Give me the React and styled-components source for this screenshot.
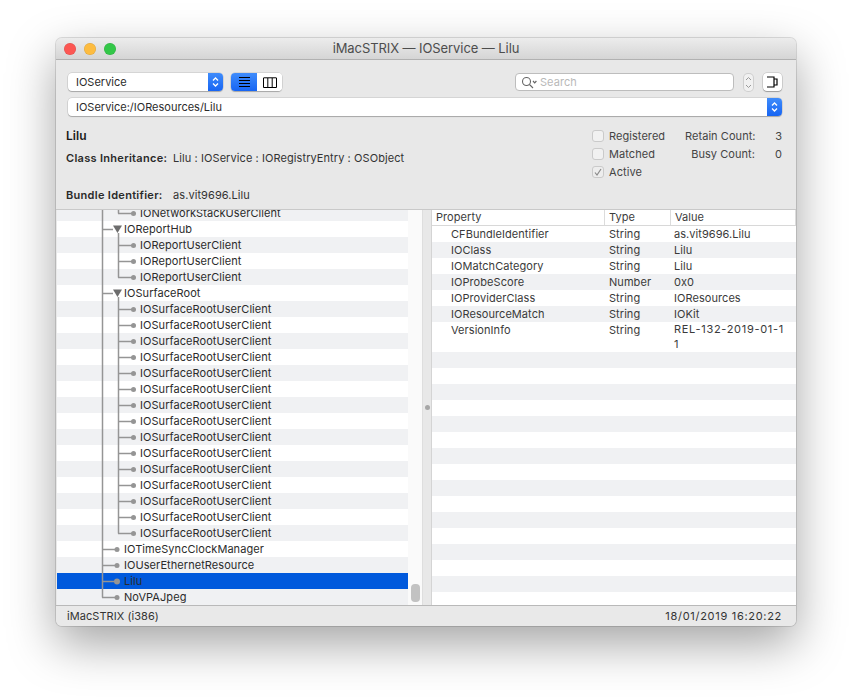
import React from 'react';
import styled, { createGlobalStyle } from 'styled-components';

const Global = createGlobalStyle`
  html, body { margin: 0; padding: 0; background: #fff; }
  body { font-family: Inter, "Liberation Sans", sans-serif; font-size: 11px; letter-spacing: .06px; color: #1f1f1f; }
`;

const Page = styled.div`
  width: 852px;
  height: 700px;
  padding: 38px 0 0 56px;
  box-sizing: border-box;
  overflow: hidden;
`;

const Win = styled.div`
  width: 740px;
  height: 588px;
  border-radius: 6px;
  background: #e8e8e8;
  box-shadow: 0 0 0 1px rgba(0,0,0,.12), 0 18px 48px rgba(0,0,0,.36);
  display: flex;
  flex-direction: column;
  overflow: hidden;
`;

const TitleBar = styled.div`
  height: 21px;
  flex: none;
  display: flex;
  align-items: center;
  padding-left: 8px;
  position: relative;
  background: linear-gradient(#ececec, #d5d5d5);
  border-bottom: 1px solid #b1b1b1;
`;

const Lights = styled.div`
  display: flex;
  gap: 8px;
`;

const Light = styled.span`
  width: 12px;
  height: 12px;
  border-radius: 50%;
  background: ${p => p.$c};
  box-shadow: inset 0 0 0 .5px rgba(0,0,0,.12);
`;

const Title = styled.div`
  position: absolute;
  inset: 0;
  text-align: center;
  line-height: 21px;
  font-size: 13px;
  letter-spacing: -.08px;
  color: #4d4d4d;
`;

const Header = styled.div`
  height: 149px;
  flex: none;
  padding: 13px 14px 0 12px;
  box-sizing: border-box;
  display: flex;
  flex-direction: column;
`;

const Toolbar = styled.div`
  display: flex;
  align-items: center;
  height: 18px;
`;

const Popup = styled.div`
  height: 18px;
  width: ${p => p.$w || '155px'};
  ${p => p.$grow && 'flex: 1;'}
  box-sizing: border-box;
  background: #fff;
  border-radius: 4px;
  box-shadow: 0 0 0 .5px rgba(0,0,0,.16), 0 1px 1px rgba(0,0,0,.22);
  display: flex;
  align-items: center;
  justify-content: space-between;
  padding-left: 8px;
  overflow: hidden;
  letter-spacing: 0;
  color: #2b2b2b;
`;

const PopupArrow = styled.span`
  width: 15px;
  height: 100%;
  background: linear-gradient(#3f8cfb, #1765f3);
  display: flex;
  align-items: center;
  justify-content: center;
`;

const Segment = styled.div`
  display: flex;
  margin-left: 8px;
  height: 18px;
  border-radius: 4px;
  overflow: hidden;
  background: #fff;
  box-shadow: 0 0 0 .5px rgba(0,0,0,.16), 0 1px 1px rgba(0,0,0,.22);
`;

const SegmentBtn = styled.span`
  display: flex;
  align-items: center;
  justify-content: center;
  width: ${p => p.$w};
  background: ${p => (p.$on ? 'linear-gradient(#3f8cfb, #1765f3)' : '#fff')};
`;

const Spacer = styled.div`
  flex: 1;
`;

const Search = styled.div`
  width: 219px;
  height: 18px;
  box-sizing: border-box;
  background: #fff;
  border-radius: 4px;
  border: 1px solid #bdbdbd;
  display: flex;
  align-items: center;
  gap: 3px;
  padding-left: 5px;
  color: #b9b9b9;
`;

const Stepper = styled.div`
  width: 9px;
  height: 17px;
  margin-left: 10px;
  background: #f1f1f1;
  border-radius: 4px;
  box-shadow: 0 0 0 1px #cfcfcf;
  display: flex;
  align-items: center;
  justify-content: center;
`;

const InspectorBtn = styled.div`
  width: 19px;
  height: 18px;
  margin-left: 10px;
  background: #fff;
  border-radius: 4px;
  box-shadow: 0 0 0 .5px rgba(0,0,0,.2), 0 1px 1px rgba(0,0,0,.25);
  display: flex;
  align-items: center;
  justify-content: center;
`;

const PathRow = styled.div`
  margin-top: 7px;
  display: flex;
`;

const Info = styled.div`
  display: flex;
  justify-content: space-between;
  margin: 12px 0 0 -2px;
`;

const InfoLeft = styled.div`
  display: flex;
  flex-direction: column;
`;

const Name = styled.div`
  font-weight: 600;
  font-size: 12px;
  line-height: 15px;
  color: #1a1a1a;
`;

const InfoLine = styled.div`
  display: flex;
  line-height: 14px;
  margin-top: ${p => p.$top};
  letter-spacing: .08px;
  color: #333;
`;

const InfoKey = styled.span`
  font-weight: 600;
  color: #2a2a2a;
  width: ${p => p.$w};
  letter-spacing: .3px;
`;

const Flags = styled.div`
  display: grid;
  grid-template-columns: 93px 70px 27px;
  grid-auto-rows: 18px;
  align-items: center;
  margin-top: -1px;
  color: #444;
`;

const Flag = styled.label`
  display: flex;
  align-items: center;
  gap: 5px;
`;

const Box = styled.span`
  width: 12px;
  height: 12px;
  box-sizing: border-box;
  border-radius: 3px;
  border: 1px solid #cacaca;
  background: ${p => (p.$on ? '#ededed' : '#f1f1f1')};
  display: flex;
  align-items: center;
  justify-content: center;
`;

const CountKey = styled.span`
  text-align: right;
  white-space: nowrap;
`;

const CountVal = styled.span`
  text-align: right;
`;

const Panes = styled.div`
  flex: 1;
  min-height: 0;
  display: flex;
  border-top: 1px solid #c9c9c9;
`;

const TreePane = styled.div`
  width: 365px;
  margin-left: 1px;
  flex: none;
  display: flex;
  background: #fafafa;
  border-right: 1px solid #dedede;
  overflow: hidden;
`;

const TreeList = styled.div`
  width: 351px;
  flex: none;
  margin-top: -5px;
`;

const TreeRow = styled.div`
  height: 16px;
  display: flex;
  align-items: center;
  background: ${p => (p.$sel ? '#0059dc' : p.$alt ? '#f0f1f3' : '#fff')};
  color: #2b2b2b;
  line-height: 16px;
`;

const Guides = styled.svg`
  flex: none;
  display: block;
`;

const Gutter = styled.div`
  flex: 1;
  display: flex;
  align-items: flex-end;
  justify-content: center;
  padding-bottom: 3px;
`;

const Thumb = styled.div`
  width: 9px;
  height: 18px;
  border-radius: 4px;
  background: #c2c2c2;
`;

const Splitter = styled.div`
  width: 8px;
  flex: none;
  display: flex;
  align-items: center;
  justify-content: center;
  background: #e8e8e8;
`;

const Dot = styled.span`
  width: 5px;
  height: 5px;
  border-radius: 50%;
  background: #a6a6a6;
`;

const TablePane = styled.div`
  flex: 1;
  min-width: 0;
  background: #fff;
  border-left: 1px solid #d4d4d4;
  overflow: hidden;
`;

const Cols = styled.div`
  display: grid;
  grid-template-columns: 172px 66px 1fr;
`;

const HeadRow = styled(Cols)`
  height: 16px;
  box-sizing: border-box;
  line-height: 15px;
  border-bottom: 1px solid #d8d8d8;
  color: #3c3c3c;
`;

const HeadCell = styled.div`
  padding-left: 4px;
  &:not(:first-child) {
    border-left: 1px solid #dcdcdc;
  }
  &:last-child {
    border-right: 1px solid #dcdcdc;
  }
`;

const Row = styled(Cols)`
  min-height: 16px;
  line-height: 16px;
  background: ${p => (p.$alt ? '#f0f1f3' : '#fff')};
  color: #3a3a3a;
`;

const Cell = styled.div`
  padding-left: ${p => p.$pad};
  padding-right: ${p => (p.$wrap ? '10px' : '2px')};
  word-break: break-all;
  line-height: ${p => (p.$wrap ? '15px' : '16px')};
  ${p => p.$wrap && 'letter-spacing: .7px;'}
`;

const StatusBar = styled.div`
  height: 21px;
  flex: none;
  display: flex;
  align-items: center;
  justify-content: space-between;
  padding: 0 14px 0 11px;
  border-top: 1px solid #b9b9b9;
  box-sizing: border-box;
  background: #e9e9e9;
  color: #333;
`;

const DateText = styled.span`
  letter-spacing: .7px;
`;

const Updown = ({ color = '#fff' }) => (
  <svg width="9" height="12" viewBox="0 0 9 12" fill="none" stroke={color} strokeWidth="1.3">
    <path d="M2 4.5 4.5 2 7 4.5M2 7.5 4.5 10 7 7.5" />
  </svg>
);

// tree connectors: depth 1 trunk at x=45, depth 2 trunk at x=61 (relative to the list)
const Connector = ({ depth, open, last, sel, inner }) => {
  const width = depth === 2 ? 83 : 67;
  const c = '#959595';
  return (
    <Guides width={width} height="16" fill="none" stroke={c} strokeWidth="1.5">
      <path d={last ? 'M45.5 0V8.5' : 'M45.5 0V16'} />
      {depth === 1 && !open && <path d="M45 8.5H59" />}
      {depth === 1 && !open && <circle cx="60" cy="8.5" r={sel ? 3 : 2.5} fill={c} stroke="none" />}
      {depth === 1 && open && <path d="M45 8.5H56" />}
      {depth === 1 && open && <path d="M56 4.5H65L60.5 12Z" fill="#6d6d6d" stroke="none" />}
      {depth === 1 && open && <path d="M61.5 12V16" />}
      {depth === 2 && <path d={inner ? 'M61.5 0V16' : 'M61.5 0V8.5'} />}
      {depth === 2 && <path d="M61 8.5H75" />}
      {depth === 2 && <circle cx="76.5" cy="8.5" r="2.5" fill={c} stroke="none" />}
    </Guides>
  );
};

const tree = [
  { name: 'IONetworkStackUserClient', depth: 2 },
  { name: 'IOReportHub', depth: 1, open: true },
  { name: 'IOReportUserClient', depth: 2, inner: true },
  { name: 'IOReportUserClient', depth: 2, inner: true },
  { name: 'IOReportUserClient', depth: 2 },
  { name: 'IOSurfaceRoot', depth: 1, open: true },
  ...Array.from({ length: 15 }, (_, i) => ({ name: 'IOSurfaceRootUserClient', depth: 2, inner: i < 14 })),
  { name: 'IOTimeSyncClockManager', depth: 1 },
  { name: 'IOUserEthernetResource', depth: 1 },
  { name: 'Lilu', depth: 1, sel: true },
  { name: 'NoVPAJpeg', depth: 1, last: true },
];

const props = [
  ['CFBundleIdentifier', 'String', 'as.vit9696.Lilu'],
  ['IOClass', 'String', 'Lilu'],
  ['IOMatchCategory', 'String', 'Lilu'],
  ['IOProbeScore', 'Number', '0x0'],
  ['IOProviderClass', 'String', 'IOResources'],
  ['IOResourceMatch', 'String', 'IOKit'],
  ['VersionInfo', 'String', 'REL-132-2019-01-11'],
];

const App = () => (
  <Page>
    <Global />
    <Win>
      <TitleBar>
        <Lights>
          <Light $c="#fc5753" />
          <Light $c="#fdbc40" />
          <Light $c="#33c748" />
        </Lights>
        <Title>iMacSTRIX — IOService — Lilu</Title>
      </TitleBar>

      <Header>
        <Toolbar>
          <Popup>
            IOService
            <PopupArrow><Updown /></PopupArrow>
          </Popup>
          <Segment>
            <SegmentBtn $on $w="26px">
              <svg width="13" height="12" viewBox="0 0 13 12" stroke="#000" strokeWidth="1">
                <path d="M1 1.5H12M1 4.5H12M1 7.5H12M1 10.5H12" />
              </svg>
            </SegmentBtn>
            <SegmentBtn $w="25px">
              <svg width="14" height="11" viewBox="0 0 14 11" fill="none" stroke="#000" strokeWidth="1">
                <path d="M.5 1V10.5H13.5V1M.5 .8H13.5M4.8 1V10.5M9.2 1V10.5" />
              </svg>
            </SegmentBtn>
          </Segment>
          <Spacer />
          <Search>
            <svg width="16" height="13" viewBox="0 0 16 13" fill="none" stroke="#666" strokeWidth="1.1">
              <circle cx="5.5" cy="5.5" r="4" />
              <path d="M8.5 8.5 12 12" />
              <path d="M12 5 13.7 6.8 15.4 5" strokeWidth="1.2" />
            </svg>
            Search
          </Search>
          <Stepper>
            <svg width="7" height="13" viewBox="0 0 7 13" fill="none" stroke="#9a9a9a" strokeWidth="1">
              <path d="M1 4 3.5 1.5 6 4M1 9 3.5 11.5 6 9" />
            </svg>
          </Stepper>
          <InspectorBtn>
            <svg width="11" height="12" viewBox="0 0 11 12" fill="none" stroke="#000" strokeWidth="1.2">
              <path d="M0 1H7V11H0M7 3H10V9H7" />
            </svg>
          </InspectorBtn>
        </Toolbar>

        <PathRow>
          <Popup $grow>
            IOService:/IOResources/Lilu
            <PopupArrow><Updown /></PopupArrow>
          </Popup>
        </PathRow>

        <Info>
          <InfoLeft>
            <Name>Lilu</Name>
            <InfoLine $top="8px">
              <InfoKey $w="107px">Class Inheritance:</InfoKey>
              Lilu : IOService : IORegistryEntry : OSObject
            </InfoLine>
            <InfoLine $top="23px">
              <InfoKey $w="107px">Bundle Identifier:</InfoKey>
              as.vit9696.Lilu
            </InfoLine>
          </InfoLeft>
          <Flags>
            <Flag><Box />Registered</Flag>
            <CountKey>Retain Count:</CountKey>
            <CountVal>3</CountVal>
            <Flag><Box />Matched</Flag>
            <CountKey>Busy Count:</CountKey>
            <CountVal>0</CountVal>
            <Flag>
              <Box $on>
                <svg width="8" height="8" viewBox="0 0 8 8" fill="none" stroke="#8a8a8a" strokeWidth="1.2">
                  <path d="M1 4.5 3 7 7 1" />
                </svg>
              </Box>
              Active
            </Flag>
          </Flags>
        </Info>
      </Header>

      <Panes>
        <TreePane>
          <TreeList>
            {tree.map((n, i) => (
              <TreeRow key={i} $alt={i % 2 === 0} $sel={n.sel}>
                <Connector {...n} />
                {n.name}
              </TreeRow>
            ))}
          </TreeList>
          <Gutter><Thumb /></Gutter>
        </TreePane>
        <Splitter><Dot /></Splitter>
        <TablePane>
          <HeadRow>
            <HeadCell>Property</HeadCell>
            <HeadCell>Type</HeadCell>
            <HeadCell>Value</HeadCell>
          </HeadRow>
          {props.map((p, i) => (
            <Row key={p[0]} $alt={i % 2 === 1}>
              <Cell $pad="19px">{p[0]}</Cell>
              <Cell $pad="5px">{p[1]}</Cell>
              <Cell $pad="4px" $wrap={p[2].length > 16}>{p[2]}</Cell>
            </Row>
          ))}
          {Array.from({ length: 16 }, (_, i) => (
            <Row key={i} $alt={i % 2 === 0} />
          ))}
        </TablePane>
      </Panes>

      <StatusBar>
        <span>iMacSTRIX (i386)</span>
        <DateText>18/01/2019 16:20:22</DateText>
      </StatusBar>
    </Win>
  </Page>
);

export default App;
